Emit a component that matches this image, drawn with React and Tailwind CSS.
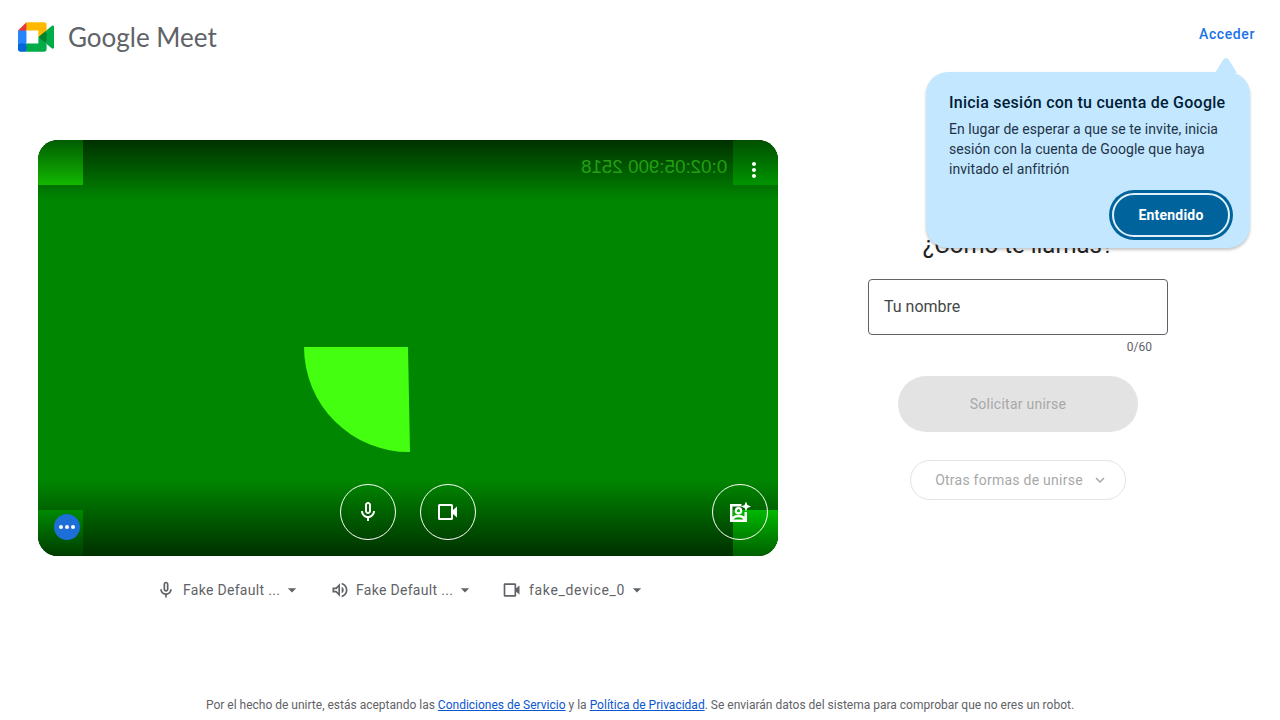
import React from 'react';
import { MdOutlineVolumeUp, MdArrowDropDown, MdMoreVert, MdExpandMore } from 'react-icons/md';

function MeetLogo() {
  return (
    <svg className="w-[36px] h-[30px]" viewBox="0 0 87.5 72">
      <path fill="#00832d" d="M49.5 36l8.53 9.75 11.47 7.33 2-17.02-2-16.64-11.69 6.44z" />
      <path fill="#0066da" d="M0 51.5V66c0 3.315 2.685 6 6 6h14.5l3-10.96-3-9.54-9.95-3z" />
      <path fill="#e53935" d="M20.5 0L0 20.5l10.55 3 9.95-3 2.95-9.41z" />
      <path fill="#2684fc" d="M20.5 20.5H0v31h20.5z" />
      <path fill="#00ac47" d="M82.6 8.68L69.5 19.42v33.66l13.16 10.79c1.97 1.54 4.85.135 4.85-2.37V11c0-2.535-2.945-3.925-4.91-2.32zM49.5 36v15.5h-29V72h43c3.315 0 6-2.685 6-6V53.08z" />
      <path fill="#ffba00" d="M63.5 0h-43v20.5h29V36l20-16.57V6c0-3.315-2.685-6-6-6z" />
    </svg>
  );
}

function MicIcon({ className }) {
  return (
    <svg className={className} viewBox="0 0 24 24" fill="currentColor">
      <path d="M12 14c1.66 0 3-1.34 3-3V5c0-1.66-1.34-3-3-3S9 3.34 9 5v6c0 1.66 1.34 3 3 3zm-1-9c0-.55.45-1 1-1s1 .45 1 1v6c0 .55-.45 1-1 1s-1-.45-1-1V5zm6 6c0 2.76-2.24 5-5 5s-5-2.24-5-5H5c0 3.53 2.61 6.43 6 6.92V21h2v-3.08c3.39-.49 6-3.39 6-6.92h-2z" />
    </svg>
  );
}

function CamIcon({ className }) {
  return (
    <svg className={className} viewBox="0 0 24 24" fill="currentColor">
      <path fillRule="evenodd" d="M3.500 4h12A1.500 1.500 0 0 1 17 5.500V10l4-3.500v11L17 14v4.500a1.500 1.500 0 0 1-1.500 1.500h-12A1.500 1.500 0 0 1 2 18.500v-13A1.500 1.500 0 0 1 3.500 4zM4 6v12h11V6z" />
    </svg>
  );
}

function EffectsIcon() {
  return (
    <svg className="w-[24px] h-[24px]" viewBox="0 0 24 24" fill="white">
      <path fillRule="evenodd" d="M2 4h11.500v2.500h-9v10.300C6.100 15.500 8.300 14.700 10.500 14.700s4.400.8 6 2.100V12H19v10H2V4zm3.500 15.500h10c-1.200-1.500-3-2.300-5-2.300s-3.800.8-5 2.300z" />
      <path fillRule="evenodd" d="M10.500 7a3.750 3.750 0 1 1 0 7.500 3.750 3.750 0 0 1 0-7.500zm0 2.200a1.550 1.550 0 1 0 0 3.100 1.550 1.550 0 0 0 0-3.100z" />
      <path d="M18 1.500l1.400 3.600L23 6.500l-3.600 1.400L18 11.500l-1.400-3.600L13 6.500l3.600-1.400z" />
    </svg>
  );
}

function VideoPreview() {
  return (
    <div className="relative w-[740px] h-[416px] rounded-[20px] overflow-hidden bg-[#008600] shrink-0">
      <div className="absolute top-0 inset-x-0 h-[60px] bg-linear-to-b/srgb from-[#003000] to-[#008600]" />
      <div className="absolute bottom-0 inset-x-0 h-[76px] bg-linear-to-b/srgb from-[#008600] to-[#003000]" />

      {/* corner markers of the fake camera feed */}
      <div className="absolute top-0 left-0 w-[45px] h-[45px] bg-linear-to-b/srgb from-[#005c00] to-[#12b800]" />
      <div className="absolute top-0 right-0 w-[45px] h-[45px] bg-linear-to-b/srgb from-[#005000] to-[#009400]" />
      <div className="absolute bottom-0 left-0 w-[45px] h-[46px] bg-linear-to-b/srgb from-[#008a00] to-[#003c00]" />
      <div className="absolute bottom-0 right-0 w-[45px] h-[46px] bg-linear-to-b/srgb from-[#00b800] to-[#006000]" />

      <svg className="absolute inset-0 w-full h-full" viewBox="38 140 740 416">
        <path fill="#45ff11" d="M304 347 L408 347 L410 452 A105 105 0 0 1 304 347 Z" />
      </svg>

      <div className="absolute top-[13px] right-[51px] -scale-x-100 text-[18.8px] leading-[28px] text-[#22a012] font-['Liberation_Sans',sans-serif]">
        0:02:05:900 2518
      </div>
      <MdMoreVert className="absolute top-[18px] right-[12px] text-white w-[24px] h-[24px]" />

      <div className="absolute bottom-[16px] inset-x-0 flex justify-center gap-[24px]">
        <button className="w-[56px] h-[56px] rounded-full border border-white flex items-center justify-center text-white">
          <MicIcon className="w-[24px] h-[24px]" />
        </button>
        <button className="w-[56px] h-[56px] rounded-full border border-white flex items-center justify-center text-white">
          <CamIcon className="w-[24px] h-[24px]" />
        </button>
      </div>
      <button className="absolute bottom-[16px] right-[10px] w-[56px] h-[56px] rounded-full border border-white flex items-center justify-center">
        <EffectsIcon />
      </button>
      <div className="absolute left-[16px] bottom-[16px] w-[26px] h-[26px] rounded-full bg-[#1b6fd6] flex items-center justify-center gap-[2px]">
        <span className="w-[4px] h-[4px] rounded-full bg-white" />
        <span className="w-[4px] h-[4px] rounded-full bg-white" />
        <span className="w-[4px] h-[4px] rounded-full bg-white" />
      </div>
    </div>
  );
}

function DeviceButton({ icon, label, className, tracking }) {
  return (
    <div className={`flex items-center text-[#5f6368] ${className}`}>
      {icon}
      <span className={`text-[14px] whitespace-nowrap ${tracking}`}>{label}</span>
      <MdArrowDropDown className="w-[20px] h-[20px] ml-[2px]" />
    </div>
  );
}

function SignInPopover() {
  return (
    <div className="absolute top-[72px] left-[926px] w-[324px] h-[176px] rounded-[22px] bg-[#c2e7ff] shadow-[0_2px_3px_0_rgba(60,64,67,0.3)] text-[#001d35] pl-[23px] pt-[20px]">
      <svg className="absolute -top-[15px] right-[12px] w-[24px] h-[16px]" viewBox="0 0 24 16">
        <path fill="#c2e7ff" d="M1 16 L9 3 Q12 -1 15 3 L23 16 Z" />
      </svg>
      <div className="text-[16px] leading-[22px] font-medium tracking-[0.25px] whitespace-nowrap">Inicia sesión con tu cuenta de Google</div>
      <p className="mt-[5px] text-[14px] leading-[20px] tracking-[0.05px] text-[#1f3347]">
        En lugar de esperar a que se te invite, inicia<br />
        sesión con la cuenta de Google que haya<br />
        invitado el anfitrión
      </p>
      <div className="absolute right-[17px] bottom-[8px] p-[3px] rounded-full bg-[#00639b]">
        <button className="w-[118px] h-[44px] rounded-full bg-[#00639b] border-2 border-[#dff1fb] text-white text-[14px] font-bold tracking-[0.2px]">
          Entendido
        </button>
      </div>
    </div>
  );
}

export default function App() {
  return (
    <div className="relative w-full h-screen overflow-hidden bg-white flex flex-col font-['Roboto',sans-serif]">
      <header className="h-[68px] shrink-0 flex items-start justify-between pl-[18px] pr-[25px]">
        <div className="flex items-center gap-[14px] pt-[21px]">
          <MeetLogo />
          <span className="text-[26px] leading-[32px] text-[#5f6368] font-['Lato',sans-serif]">Google Meet</span>
        </div>
        <a className="mt-[25px] text-[14px] leading-[18px] font-medium tracking-[0.6px] text-[#1a73e8]">Acceder</a>
      </header>

      <main className="flex-1 flex items-start pl-[38px] pt-[72px]">
        <div className="flex flex-col">
          <VideoPreview />
          <div className="flex items-center mt-[22px] pl-[118px] h-[24px]">
            <DeviceButton className="w-[173px]" tracking="tracking-[0.3px]" icon={<MicIcon className="w-[20px] h-[20px] mr-[7px]" />} label="Fake Default ..." />
            <DeviceButton className="w-[173px]" tracking="tracking-[0.3px]" icon={<MdOutlineVolumeUp className="w-[20px] h-[20px] ml-[1px] mr-[6px]" />} label="Fake Default ..." />
            <DeviceButton tracking="tracking-[0.65px]" icon={<CamIcon className="w-[20px] h-[20px] mr-[7px]" />} label="fake_device_0" />
          </div>
        </div>

        <div className="ml-[90px] w-[300px] flex flex-col items-center pt-[89px]">
          <h2 className="text-[24px] leading-[32px] text-[#1f1f1f] font-normal whitespace-nowrap">¿Cómo te llamas?</h2>
          <div className="mt-[18px] w-full h-[56px] border border-[#5f6368] rounded-[4px] flex items-center px-[15px] text-[16px] text-[#444746]">
            Tu nombre
          </div>
          <div className="w-full text-right pr-[16px] text-[12px] leading-[16px] mt-[4px] text-[#5f6368]">0/60</div>
          <button className="mt-[21px] w-[240px] h-[56px] rounded-full bg-[#e3e3e3] text-[14px] tracking-[0.25px] text-[#a8a8a8]">
            Solicitar unirse
          </button>
          <button className="mt-[28px] w-[216px] h-[40px] rounded-full border border-[#e3e3e3] flex items-center justify-center gap-[8px] pl-[8px] text-[14px] tracking-[0.25px] text-[#a8a8a8]">
            Otras formas de unirse
            <MdExpandMore className="w-[18px] h-[18px]" />
          </button>
        </div>
      </main>

      <footer className="h-[32px] shrink-0 pt-[9px] text-center text-[12px] leading-[16px] text-[#5f6368]">
        Por el hecho de unirte, estás aceptando las <a className="text-[#0b57d0] underline">Condiciones de Servicio</a> y la <a className="text-[#0b57d0] underline">Política de Privacidad</a>. Se enviarán datos del sistema para comprobar que no eres un robot.
      </footer>

      <SignInPopover />
    </div>
  );
}
